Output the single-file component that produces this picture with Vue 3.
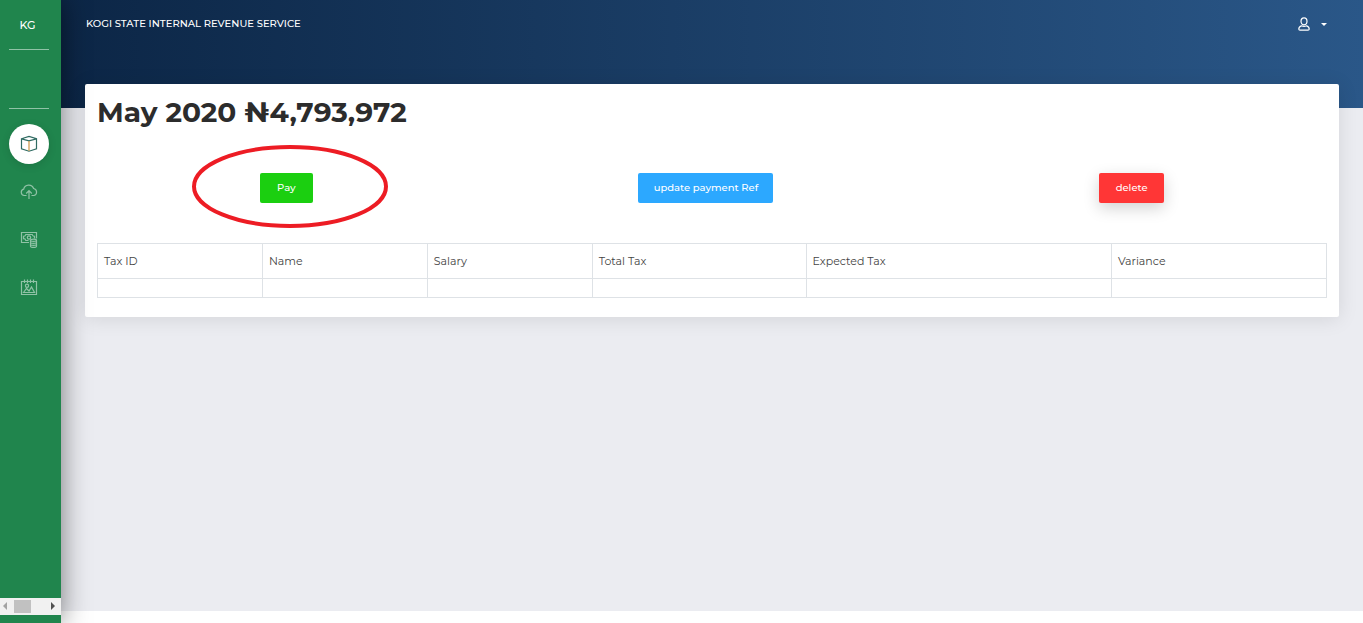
<script setup>
const columns = [
  { label: 'Tax ID', size: 'narrow' },
  { label: 'Name', size: 'narrow' },
  { label: 'Salary', size: 'narrow' },
  { label: 'Total Tax', size: 'medium' },
  { label: 'Expected Tax', size: 'wide' },
  { label: 'Variance', size: 'rest' },
]
</script>

<template>
  <div class="shell">
    <aside class="sidebar">
      <a class="brand" href="#">KG</a>
      <nav class="nav">
        <a class="nav-item active" href="#" aria-label="Overview">
          <svg viewBox="0 0 18 18" width="18" height="18">
            <path d="M1.500 3.800 9 1.500l7.500 2.300v10L9 16.200l-7.500-2.400zM1.500 3.800 9 5.800l7.500-2" stroke="#2f6b62" />
            <path d="M9 6v10" stroke="#cf9443" />
          </svg>
        </a>
        <a class="nav-item" href="#" aria-label="Upload">
          <svg viewBox="0 0 18 18" width="18" height="18">
            <path d="M6.500 12.500H4.200a3.200 3.200 0 0 1-.5-6.300A5.200 5.200 0 0 1 13.600 5.500a3.600 3.600 0 0 1 .4 7H11.500M9 16V8M6.200 10.500 9 7.700l2.800 2.800" />
          </svg>
        </a>
        <a class="nav-item" href="#" aria-label="Payments">
          <svg viewBox="0 0 18 18" width="18" height="18">
            <path d="M9 11.500H1.500v-10h15v6M8.500 9.500H5.800A2.300 2.300 0 0 0 3.500 7.600V5.400A2.300 2.300 0 0 0 5.800 3.500h6.400a2.300 2.300 0 0 0 2.300 1.900V7.500" />
            <circle cx="9" cy="6.500" r="1.700" />
            <path d="M10.500 9.300v5.900c0 1.600 6 1.600 6 0v-5.900c0-1.600-6-1.600-6 0c0 1.500 6 1.500 6 0M10.500 11.300c0 1.500 6 1.500 6 0M10.500 13.300c0 1.500 6 1.500 6 0" />
          </svg>
        </a>
        <a class="nav-item" href="#" aria-label="Records">
          <svg viewBox="0 0 18 18" width="18" height="18">
            <path d="M1.500 2.500h15v13h-15zM4.500.5v3.500M7.500.5v3.500M10.500.5v3.500M13.500.5v3.500M3.500 13.500l3-4 2.500 2.500 2.500-4 3 5.500z" />
            <circle cx="7" cy="6.800" r="1.600" />
          </svg>
        </a>
      </nav>
      <div class="scroller">
        <button type="button" class="arrow" aria-label="Scroll left">
          <svg viewBox="0 0 4 8" width="4" height="8"><path d="M4 0v8L0 4z" fill="#a3a3a3" /></svg>
        </button>
        <span class="thumb"></span>
        <button type="button" class="arrow end" aria-label="Scroll right">
          <svg viewBox="0 0 4 8" width="4" height="8"><path d="M0 0v8l4-4z" fill="#505050" /></svg>
        </button>
      </div>
    </aside>

    <div class="page">
      <header class="topbar">
        <span class="org">KOGI STATE INTERNAL REVENUE SERVICE</span>
        <button type="button" class="account" aria-label="Account">
          <svg class="user" viewBox="0 0 12 14" width="12" height="14">
            <ellipse cx="6" cy="4.300" rx="3" ry="3.500" />
            <path d="M3.500 8.800C1.700 9.300.8 10.600.8 12c0 .8.400 1.200 1.200 1.200h8c.8 0 1.200-.4 1.200-1.200 0-1.400-.9-2.700-2.700-3.200-1.500.8-3.500.8-5 0z" />
          </svg>
          <span class="caret"></span>
        </button>
      </header>

      <main class="card">
        <h1>May 2020 ₦4,793,972</h1>
        <div class="actions">
          <div class="highlighted">
            <button type="button" class="btn pay">Pay</button>
            <svg class="ring" viewBox="0 0 196 83" width="196" height="83">
              <ellipse cx="98" cy="41.500" rx="96" ry="39.500" />
            </svg>
          </div>
          <button type="button" class="btn update">update payment Ref</button>
          <button type="button" class="btn delete">delete</button>
        </div>
        <table>
          <colgroup>
            <col v-for="c in columns" :key="c.label" :class="c.size" />
          </colgroup>
          <thead>
            <tr>
              <th v-for="c in columns" :key="c.label" scope="col">{{ c.label }}</th>
            </tr>
          </thead>
          <tbody>
            <tr>
              <td v-for="c in columns" :key="c.label"></td>
            </tr>
          </tbody>
        </table>
      </main>
    </div>
  </div>
</template>

<style>
body {
  margin: 0;
  background: #fff;
}
</style>

<style scoped>
.shell,
.shell * {
  box-sizing: border-box;
}
.shell {
  display: flex;
  min-height: 100vh;
  font-family: Montserrat, Inter, "Open Sans", sans-serif;
}
a {
  color: #fff;
  text-decoration: none;
}
button {
  font: inherit;
  border: 0;
  cursor: pointer;
}
.sidebar {
  z-index: 1;
  flex: none;
  display: flex;
  flex-direction: column;
  width: 61px;
  padding-bottom: 8px;
  background: #20854d;
  box-shadow: 0 0 28px rgba(0, 0, 0, 0.5);
}
.brand {
  width: 40px;
  height: 50px;
  margin-left: 9px;
  padding-right: 3px;
  border-bottom: 1px solid #90c2a6;
  font-size: 11px;
  font-weight: 500;
  line-height: 50px;
  text-align: center;
}
.nav {
  display: flex;
  flex-direction: column;
  gap: 8px;
  width: 40px;
  margin: 58px 0 0 9px;
  padding-top: 15px;
  border-top: 1px solid #90c2a6;
}
.nav-item {
  display: flex;
  align-items: center;
  justify-content: center;
  height: 40px;
  border-radius: 50%;
}
.nav-item svg {
  fill: none;
  stroke: #90c2a6;
  stroke-width: 1.2;
}
.nav-item.active {
  background: #fff;
  box-shadow: 0 2px 8px rgba(0, 0, 0, 0.12);
}
.scroller {
  display: flex;
  align-items: center;
  height: 17px;
  margin-top: auto;
  background: #f1f1f1;
}
.arrow {
  display: flex;
  align-items: center;
  width: 14px;
  height: 17px;
  padding: 0 0 1px 3px;
  background: none;
}
.arrow.end {
  margin-left: auto;
  width: 13px;
}
.thumb {
  width: 17px;
  height: 13px;
  background: #c1c1c1;
}
.page {
  flex: 1;
  min-width: 0;
  margin-bottom: 12px;
  padding: 0 24px 24px;
  background: linear-gradient(90deg, #0c2646, #2a5788) top / 100% 108px no-repeat, #ebecf1;
}
.topbar {
  display: flex;
  align-items: center;
  justify-content: space-between;
  height: 48px;
  margin-bottom: 36px;
  padding: 0 12px 0 1px;
  color: #fff;
}
.org {
  padding-bottom: 2px;
  font-size: 10px;
  font-weight: 500;
}
.account {
  display: flex;
  align-items: center;
  gap: 11px;
  padding: 0;
  background: none;
}
.user {
  fill: none;
  stroke: #fff;
  stroke-width: 1.2;
}
.caret {
  border: 3px solid transparent;
  border-top-color: #fff;
  border-bottom: 0;
}
.card {
  padding: 11px 12px 19px;
  background: #fff;
  border-radius: 2px;
  box-shadow: 0 2px 20px rgba(0, 0, 0, 0.1);
}
h1 {
  margin: 0;
  font-size: 28px;
  line-height: 34px;
  font-weight: 700;
  color: #2c2c2c;
}
.actions {
  display: flex;
  justify-content: space-around;
  margin: 44px 0 40px;
}
.highlighted {
  position: relative;
}
.ring {
  position: absolute;
  left: -68px;
  top: -28px;
  fill: none;
  stroke: #ed1c24;
  stroke-width: 4;
  pointer-events: none;
}
.btn {
  display: block;
  height: 30px;
  padding: 0 0 2px;
  border-radius: 2px;
  font-size: 10px;
  font-weight: 500;
  color: #fff;
}
.pay {
  width: 53px;
  background: #1bcf10;
}
.update {
  width: 135px;
  background: #2ca8ff;
}
.delete {
  width: 65px;
  background: #ff3636;
  box-shadow: 0 5px 16px rgba(0, 0, 0, 0.18);
}
table {
  width: 100%;
  table-layout: fixed;
  border-collapse: collapse;
}
.narrow {
  width: 13.42%;
}
.medium {
  width: 17.4%;
}
.wide {
  width: 24.85%;
}
th,
td {
  border: 1px solid #dee2e6;
  padding: 0 6px;
}
th {
  height: 35px;
  font-size: 11px;
  font-weight: 400;
  text-align: left;
  color: #444;
}
td {
  height: 19px;
}
</style>
